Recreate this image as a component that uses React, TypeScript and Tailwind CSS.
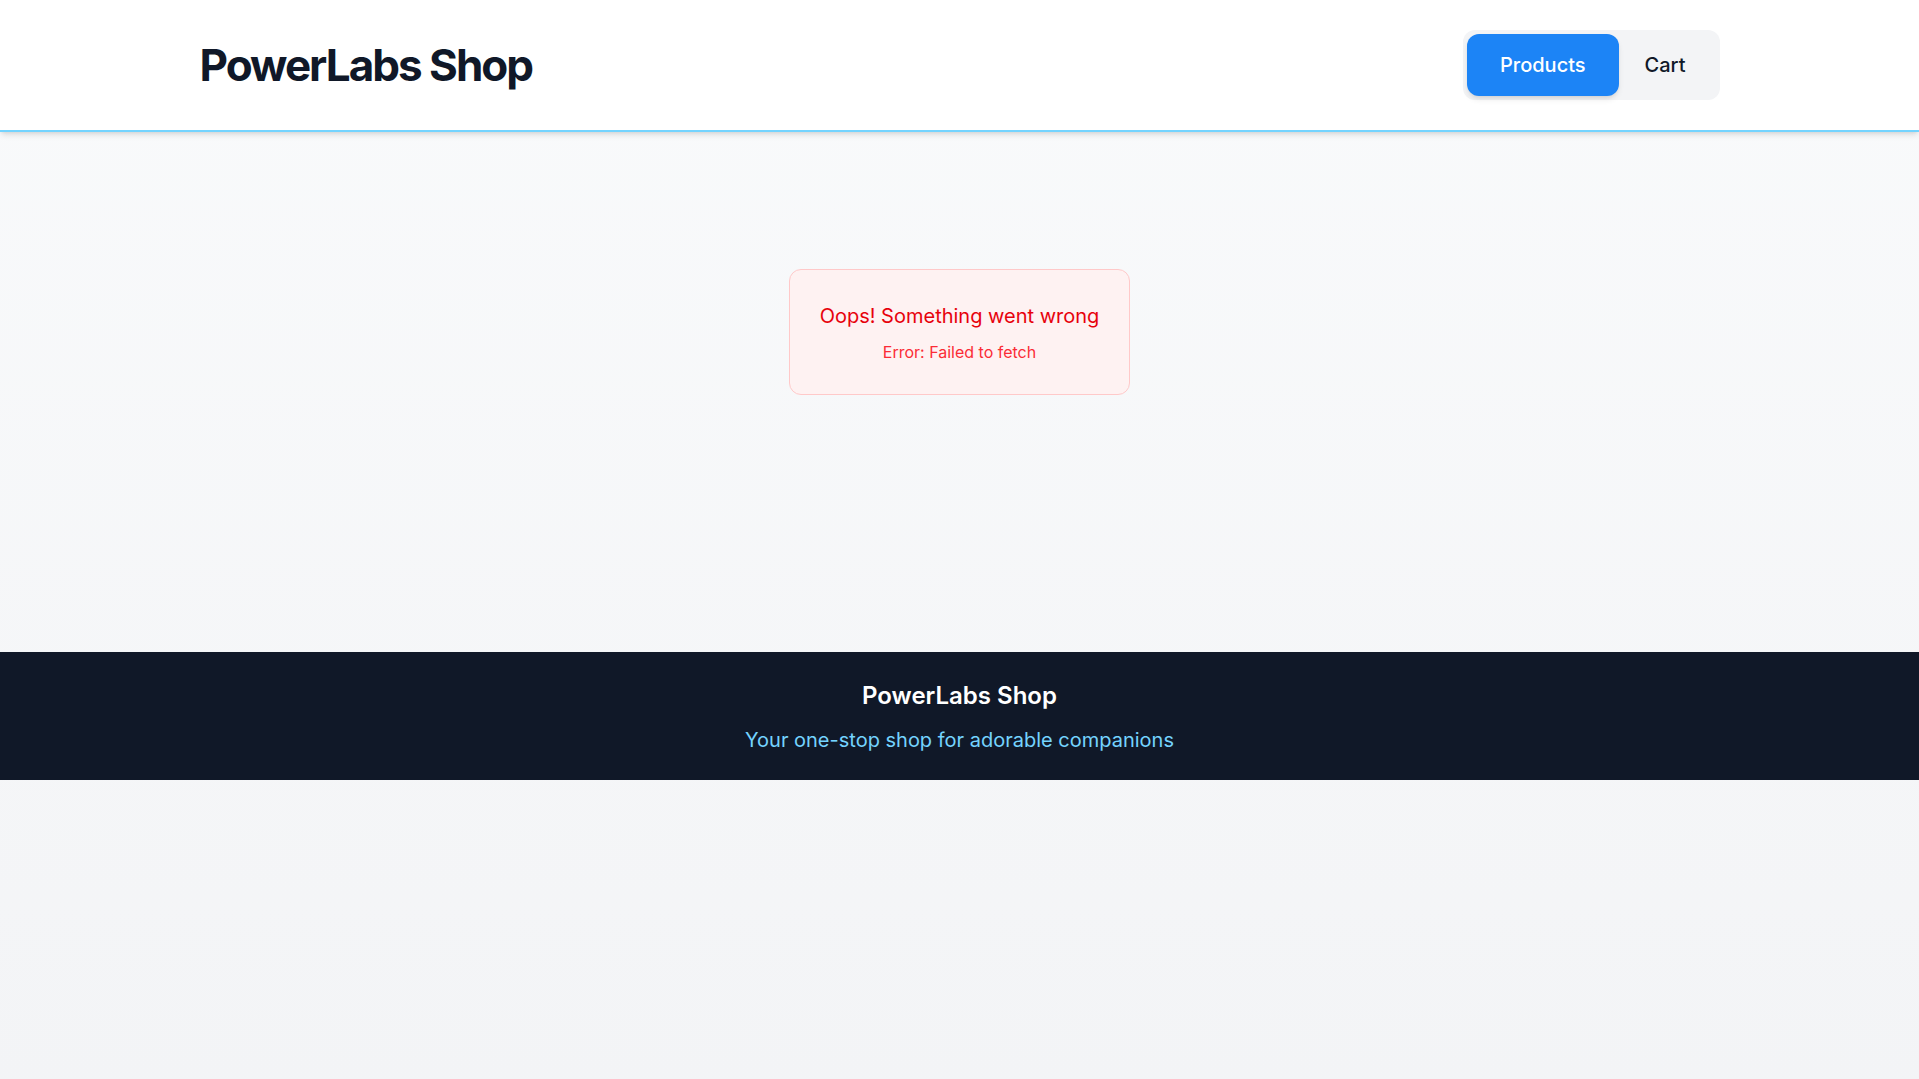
import React from 'react';

const App: React.FC = () => {
  return (
    <div className="min-h-screen bg-gradient-to-b from-gray-50 to-gray-100 font-['Inter',sans-serif]">
      {/* Header */}
      <header className="bg-white border-b-2 border-sky-300 shadow-md">
        <div className="mx-auto max-w-[1536px] px-2 h-[130px] flex items-center justify-between">
          <h1 className="text-[44px] font-bold tracking-[-0.045em] text-gray-900">PowerLabs Shop</h1>
          <nav className="flex items-center p-1 pr-2 bg-gray-100 rounded-xl">
            <button className="px-[33px] py-[17px] rounded-xl bg-[#1c84f6] text-white text-xl font-medium shadow-md">
              Products
            </button>
            <button className="px-[26px] py-[17px] rounded-xl text-gray-900 text-xl font-medium">
              Cart
            </button>
          </nav>
        </div>
      </header>

      {/* Main */}
      <main className="h-[520px] pt-[137px] flex justify-center items-start">
        <div className="px-[30px] pt-8 pb-[30px] bg-red-50 border border-red-200 rounded-xl text-center">
          <h2 className="text-xl text-red-600 mb-2.5">Oops! Something went wrong</h2>
          <p className="text-base text-red-500">Error: Failed to fetch</p>
        </div>
      </main>

      {/* Footer */}
      <footer className="bg-gray-900 pt-7 pb-[26px] text-center">
        <h3 className="text-2xl font-semibold text-white mb-[14px]">PowerLabs Shop</h3>
        <p className="text-xl text-sky-300">Your one-stop shop for adorable companions</p>
      </footer>
    </div>
  );
};

export default App;
